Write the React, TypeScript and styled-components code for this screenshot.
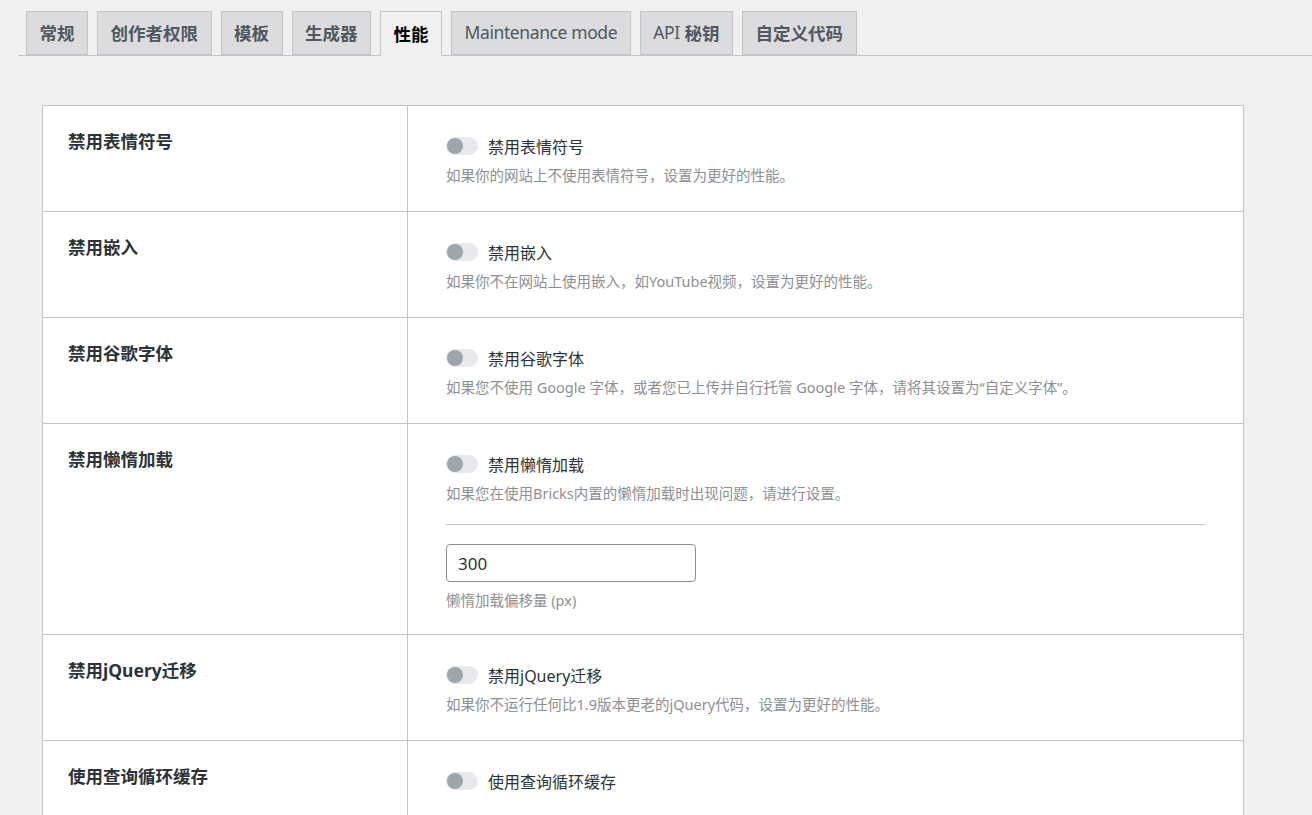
import React from "react";
import styled, { createGlobalStyle } from "styled-components";

const Global = createGlobalStyle`
  html, body { margin: 0; padding: 0; background: #f0f0f1; }
  body { font-family: "Noto Sans", "Noto Sans CJK SC", sans-serif; color: #3c434a; }
  * { box-sizing: border-box; }
`;

const Page = styled.div`
  padding: 11px 0 0 18px;
  overflow: hidden;
  height: 815px;
`;

const TabBar = styled.nav`
  display: flex;
  align-items: flex-end;
  border-bottom: 1px solid #c3c4c7;
  padding-left: 8px;
  gap: 9px;
  height: 45px;
`;

const Tab = styled.a<{ $active?: boolean }>`
  display: flex;
  align-items: center;
  gap: 0.28em;
  height: ${(p) => (p.$active ? "45px" : "44px")};
  margin-bottom: ${(p) => (p.$active ? "-1px" : "0")};
  padding: 0 12.5px 2px;
  border: 1px solid #c3c4c7;
  border-bottom: ${(p) => (p.$active ? "none" : "1px solid #c3c4c7")};
  background: ${(p) => (p.$active ? "#f0f0f1" : "#dcdcde")};
  color: ${(p) => (p.$active ? "#000" : "#50575e")};
  font-size: 17.5px;
  font-weight: ${(p) => (p.$active ? 700 : 600)};
  white-space: nowrap;
  cursor: pointer;
`;

const Latin = styled.span`
  font-weight: 400;
  letter-spacing: -0.4px;
`;

const Table = styled.div`
  margin: 49px 0 0 24px;
  width: 1202px;
  background: #fff;
  border: 1px solid #c3c4c7;
  border-bottom: none;
`;

const Row = styled.div`
  display: grid;
  grid-template-columns: 365px 1fr;
  border-bottom: 1px solid #c3c4c7;
`;

const Label = styled.div`
  padding: 22px 10px 24px 25px;
  font-size: 17.5px;
  line-height: 26px;
  font-weight: 700;
  color: #2c3338;
  border-right: 1px solid #c3c4c7;
`;

const Cell = styled.div<{ $compact?: boolean }>`
  padding: 28px 38px ${(p) => (p.$compact ? 24 : 26)}px 38px;
`;

const ToggleLine = styled.label`
  display: flex;
  align-items: center;
  gap: 10px;
  height: 24px;
  font-size: 16px;
  color: #2c3338;
`;

const Track = styled.span`
  position: relative;
  display: inline-block;
  width: 32px;
  height: 18px;
  border-radius: 9px;
  background: #e7e9ed;
`;

const Knob = styled.span`
  position: absolute;
  left: 1px;
  top: 1px;
  width: 16px;
  height: 16px;
  border-radius: 50%;
  background: #9ea5ad;
`;

const Desc = styled.p<{ $gap?: number }>`
  margin: ${(p) => p.$gap ?? 7}px 0 0;
  font-size: 14.5px;
  line-height: 20px;
  color: #8c8f94;
`;

const Divider = styled.hr`
  margin: 21px 0 0;
  border: none;
  border-top: 1px solid #c3c4c7;
`;

const NumberInput = styled.input`
  display: block;
  margin-top: 19px;
  width: 250px;
  height: 38px;
  padding: 0 11px;
  border: 1px solid #8c8f94;
  border-radius: 4px;
  font-family: "Noto Sans", sans-serif;
  font-size: 17px;
  color: #2c3338;
  background: #fff;
  outline: none;
`;

const Toggle = ({ label }: { label: string }) => (
  <ToggleLine>
    <Track>
      <Knob />
    </Track>
    {label}
  </ToggleLine>
);

const tabs: { key: string; latin?: string; cjk?: string }[] = [
  { key: "常规", cjk: "常规" },
  { key: "创作者权限", cjk: "创作者权限" },
  { key: "模板", cjk: "模板" },
  { key: "生成器", cjk: "生成器" },
  { key: "性能", cjk: "性能" },
  { key: "Maintenance mode", latin: "Maintenance mode" },
  { key: "API 秘钥", latin: "API", cjk: "秘钥" },
  { key: "自定义代码", cjk: "自定义代码" },
];

const rows = [
  { title: "禁用表情符号", desc: "如果你的网站上不使用表情符号，设置为更好的性能。" },
  { title: "禁用嵌入", desc: "如果你不在网站上使用嵌入，如YouTube视频，设置为更好的性能。" },
  { title: "禁用谷歌字体", desc: "如果您不使用 Google 字体，或者您已上传并自行托管 Google 字体，请将其设置为“自定义字体”。" },
  { title: "禁用懒惰加载", desc: "如果您在使用Bricks内置的懒惰加载时出现问题，请进行设置。", extra: true },
  { title: "禁用jQuery迁移", desc: "如果你不运行任何比1.9版本更老的jQuery代码，设置为更好的性能。" },
  { title: "使用查询循环缓存", desc: "" },
];

export default function App() {
  return (
    <Page>
      <Global />
      <TabBar>
        {tabs.map((t) => (
          <Tab key={t.key} $active={t.key === "性能"}>
            {t.latin && <Latin>{t.latin}</Latin>}
            {t.cjk && <span>{t.cjk}</span>}
          </Tab>
        ))}
      </TabBar>
      <Table>
        {rows.map((r) => (
          <Row key={r.title}>
            <Label>{r.title}</Label>
            <Cell $compact={r.extra}>
              <Toggle label={r.title} />
              {r.desc && <Desc>{r.desc}</Desc>}
              {r.extra && (
                <>
                  <Divider />
                  <NumberInput defaultValue="300" />
                  <Desc $gap={8}>懒惰加载偏移量 (px)</Desc>
                </>
              )}
            </Cell>
          </Row>
        ))}
      </Table>
    </Page>
  );
}
